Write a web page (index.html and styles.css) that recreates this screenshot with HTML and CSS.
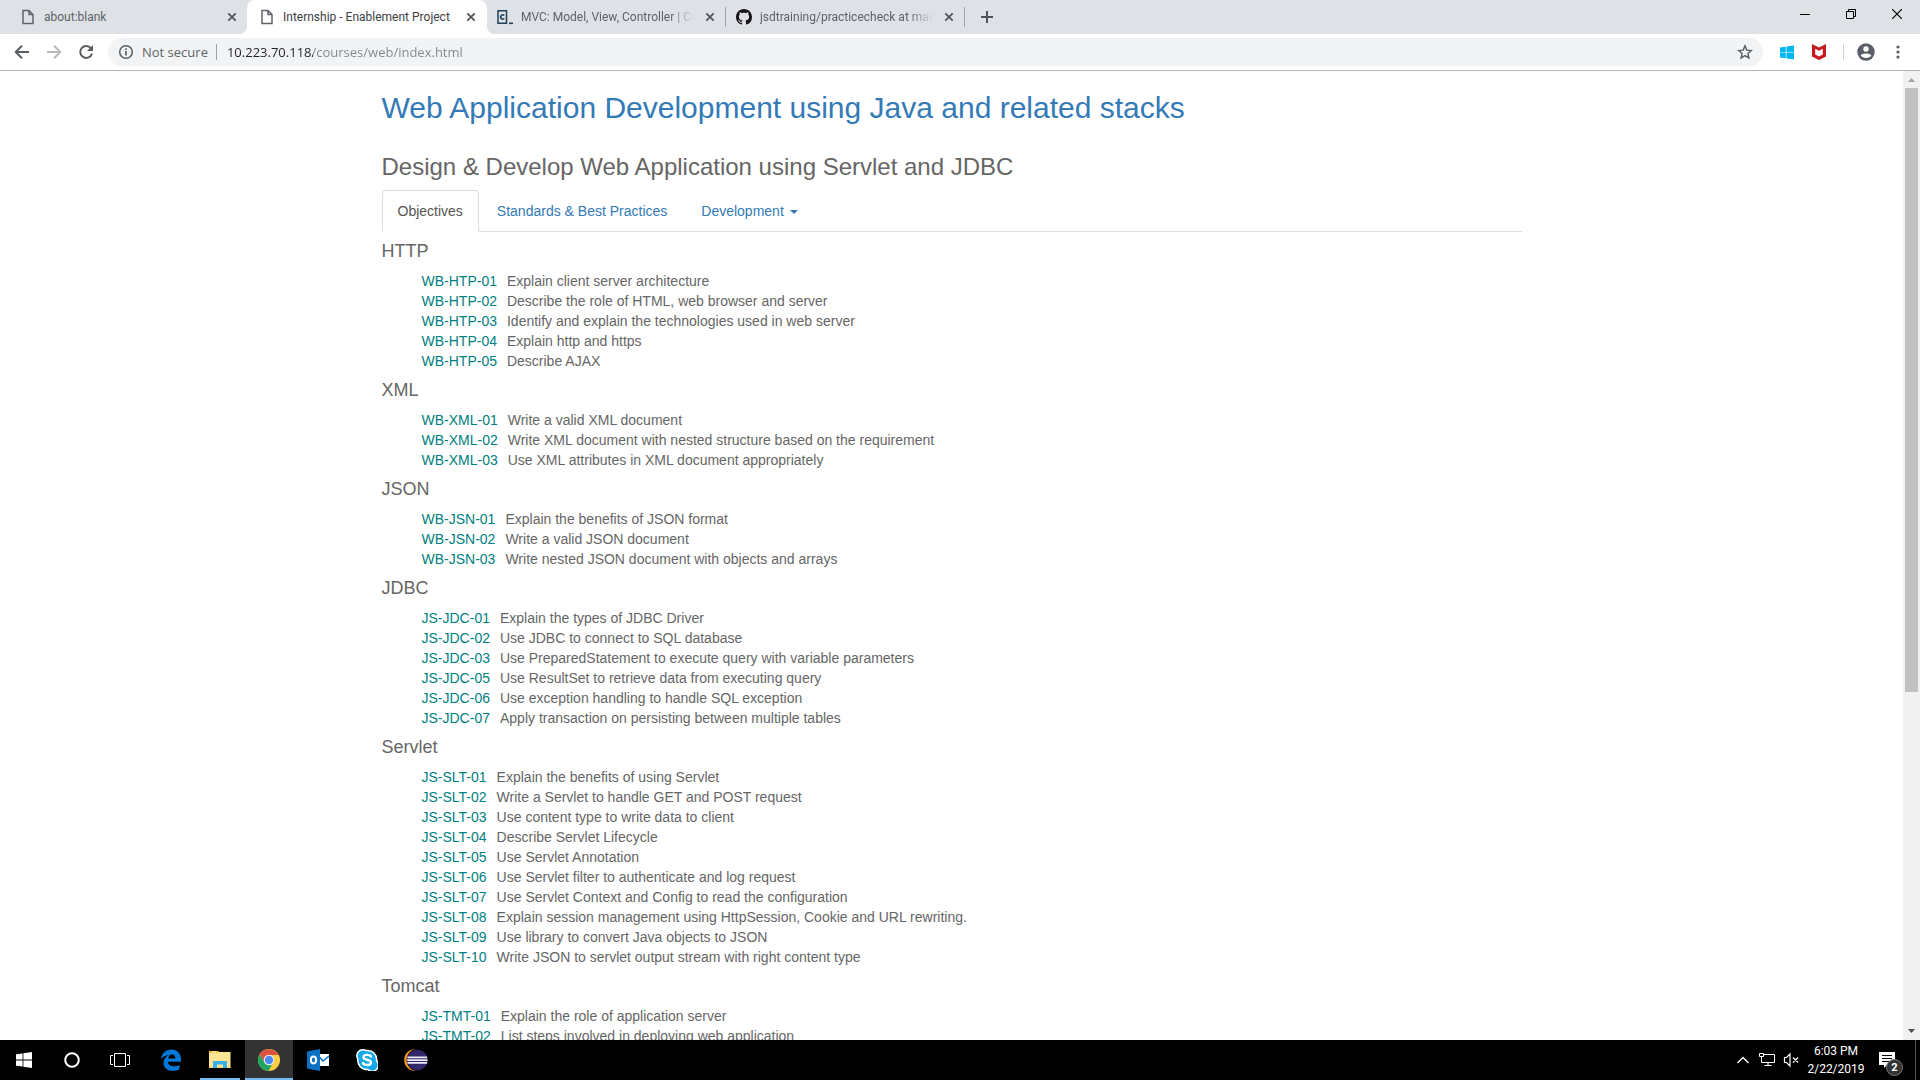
FILE: index.html
```html
<!DOCTYPE html>
<html lang="en">
<head>
<meta charset="utf-8">
<title>Internship - Enablement Project</title>
<link rel="stylesheet" href="styles.css">
</head>
<body>
<svg class="defs" aria-hidden="true">
  <symbol id="file" viewBox="0 0 16 16"><path d="M3 1.500h6L13 5.500v9H3zM9 1.500v4h4" fill="none" stroke="#5f6368" stroke-width="1.500"/></symbol>
  <symbol id="cross" viewBox="0 0 16 16"><path d="M4.300 4.300l7.400 7.400M11.700 4.300l-7.400 7.400" stroke="#4f5357" stroke-width="1.700"/></symbol>
  <symbol id="windows" viewBox="0 0 16 16"><path d="M0 2.300l6.600-.9v6.200H0zM7.400 1.200L16 0v7.600H7.400zM0 8.400h6.600v6.200L0 13.700zM7.400 8.400H16V16l-8.600-1.200z" fill="currentColor"/></symbol>
</svg>

<header class="browser">
  <div class="tabstrip">
    <div class="tab first">
      <svg class="favicon"><use href="#file"/></svg>
      <span class="tab-title">about:blank</span>
      <button class="tab-close" aria-label="Close tab"><svg class="favicon"><use href="#cross"/></svg></button>
    </div>
    <div class="tab active">
      <svg class="favicon"><use href="#file"/></svg>
      <span class="tab-title">Internship - Enablement Project</span>
      <button class="tab-close" aria-label="Close tab"><svg class="favicon"><use href="#cross"/></svg></button>
    </div>
    <div class="tab divided">
      <svg class="favicon" viewBox="0 0 16 16"><path d="M1 1.700h8.500v12.600H1z" fill="none" stroke="#204056" stroke-width="1.500"/><path d="M7.200 6.500a2 2.200 0 1 0 0 3" fill="none" stroke="#204056" stroke-width="1.600"/><path d="M12 14.300h4" stroke="#204056" stroke-width="1.600"/></svg>
      <span class="tab-title fade">MVC: Model, View, Controller | Co</span>
      <button class="tab-close" aria-label="Close tab"><svg class="favicon"><use href="#cross"/></svg></button>
    </div>
    <div class="tab divided">
      <svg class="favicon" viewBox="0 0 16 16"><path fill="#171515" d="M8 0C3.580 0 0 3.580 0 8c0 3.540 2.290 6.530 5.470 7.590.4.070.55-.17.55-.38 0-.19-.01-.82-.01-1.490-2.010.37-2.530-.49-2.690-.94-.09-.23-.48-.94-.82-1.130-.28-.15-.68-.52-.01-.53.63-.01 1.080.58 1.230.82.72 1.210 1.870.87 2.330.66.07-.52.28-.87.51-1.070-1.780-.2-3.640-.89-3.640-3.950 0-.87.31-1.590.82-2.150-.08-.2-.36-1.020.08-2.120 0 0 .67-.21 2.200.82.64-.18 1.320-.27 2-.27s1.360.09 2 .27c1.530-1.040 2.200-.82 2.200-.82.44 1.100.16 1.920.08 2.120.51.56.82 1.270.82 2.150 0 3.070-1.870 3.750-3.650 3.950.29.25.54.73.54 1.480 0 1.070-.01 1.930-.01 2.200 0 .21.15.46.55.38A8.010 8.010 0 0 0 16 8c0-4.420-3.580-8-8-8z"/></svg>
      <span class="tab-title fade">jsdtraining/practicecheck at mast</span>
      <button class="tab-close" aria-label="Close tab"><svg class="favicon"><use href="#cross"/></svg></button>
    </div>
    <button class="new-tab" aria-label="New tab"><svg class="favicon" viewBox="0 0 16 16"><path d="M8 2v12M2 8h12" stroke="#50545a" stroke-width="2"/></svg></button>
    <div class="window-controls">
      <button aria-label="Minimize"><svg class="caption-icon" viewBox="0 0 10 10"><path d="M0 5.500h10" stroke="#000"/></svg></button>
      <button aria-label="Restore"><svg class="caption-icon" viewBox="0 0 10 10"><path d="M.5 2.500h7v7h-7zM2.500 2.500v-2h7v7h-2" fill="none" stroke="#000"/></svg></button>
      <button aria-label="Close"><svg class="caption-icon" viewBox="0 0 10 10"><path d="M0 0l10 10M10 0L0 10" stroke="#000" stroke-width="1.200"/></svg></button>
    </div>
  </div>
  <div class="toolbar">
    <button class="tool" aria-label="Back"><svg class="favicon" viewBox="0 0 16 16"><path d="M15 8H2M8 1.700L1.700 8 8 14.300" fill="none" stroke="#5a5e63" stroke-width="2"/></svg></button>
    <button class="tool" aria-label="Forward"><svg class="favicon" viewBox="0 0 16 16"><path d="M1 8h13M8 1.700L14.300 8 8 14.300" fill="none" stroke="#b9babc" stroke-width="2"/></svg></button>
    <button class="tool" aria-label="Reload"><svg class="favicon" viewBox="0 0 16 16"><path d="M13 4.300A6 6 0 1 0 14 9.500" fill="none" stroke="#5a5e63" stroke-width="2"/><path d="M15 1v6H9z" fill="#5a5e63"/></svg></button>
    <div class="omnibox">
      <svg class="favicon" viewBox="0 0 16 16"><circle cx="8" cy="8" r="6.300" fill="none" stroke="#5a5e63" stroke-width="1.500"/><path d="M8 7v4.500M8 4.300v1.600" stroke="#5a5e63" stroke-width="1.700"/></svg>
      <label class="security" for="address">Not secure</label>
      <input class="address" id="address" type="text" value="10.223.70.118/courses/web/index.html">
      <button class="star" aria-label="Bookmark this page"><svg class="favicon" viewBox="0 0 16 16"><path d="M8 1.900l1.800 4.200 4.500.4-3.400 3 1 4.500L8 11.600 4.100 14l1-4.500-3.400-3 4.500-.4z" fill="none" stroke="#5a5e63" stroke-width="1.400"/></svg></button>
    </div>
    <button class="tool windows-ext" aria-label="Windows extension"><svg class="ext-icon"><use href="#windows"/></svg></button>
    <button class="tool" aria-label="McAfee WebAdvisor"><svg class="favicon" viewBox="0 0 16 16"><path d="M1 0l7 3.500L15 0v12.500L8 16l-7-3.500z" fill="#c8191e"/><path d="M4.200 4.800L8 6.700l3.800-1.900v5.700L8 12.500l-3.800-2z" fill="#fff"/></svg></button>
    <span class="tool-divider"></span>
    <button class="tool profile" aria-label="Profile"><svg class="avatar" viewBox="0 0 18 18"><circle cx="9" cy="9" r="8.700" fill="#5a5e66"/><circle cx="9" cy="6" r="2.700" fill="#fff"/><path d="M3.600 12.500C4.800 9.700 13.200 9.700 14.400 12.500 12.500 15.800 5.500 15.800 3.600 12.500z" fill="#fff"/></svg></button>
    <button class="tool" aria-label="Menu"><svg class="favicon" viewBox="0 0 16 16"><g fill="#5a5e63"><circle cx="8" cy="3" r="1.600"/><circle cx="8" cy="8" r="1.600"/><circle cx="8" cy="13" r="1.600"/></g></svg></button>
  </div>
</header>

<div class="viewport">
  <main class="page">
    <div class="container">
      <h2 class="course">Web Application Development using Java and related stacks</h2>
      <h3 class="module">Design &amp; Develop Web Application using Servlet and JDBC</h3>
      <nav class="nav-tabs">
        <a class="nav-link current" href="#objectives">Objectives</a>
        <a class="nav-link" href="#standards">Standards &amp; Best Practices</a>
        <a class="nav-link" href="#development">Development <span class="caret"></span></a>
      </nav>
      <section id="objectives">
        <h4 class="topic">HTTP</h4>
        <ul class="goals">
          <li><span class="code">WB-HTP-01</span>Explain client server architecture</li>
          <li><span class="code">WB-HTP-02</span>Describe the role of HTML, web browser and server</li>
          <li><span class="code">WB-HTP-03</span>Identify and explain the technologies used in web server</li>
          <li><span class="code">WB-HTP-04</span>Explain http and https</li>
          <li><span class="code">WB-HTP-05</span>Describe AJAX</li>
        </ul>
        <h4 class="topic">XML</h4>
        <ul class="goals">
          <li><span class="code">WB-XML-01</span>Write a valid XML document</li>
          <li><span class="code">WB-XML-02</span>Write XML document with nested structure based on the requirement</li>
          <li><span class="code">WB-XML-03</span>Use XML attributes in XML document appropriately</li>
        </ul>
        <h4 class="topic">JSON</h4>
        <ul class="goals">
          <li><span class="code">WB-JSN-01</span>Explain the benefits of JSON format</li>
          <li><span class="code">WB-JSN-02</span>Write a valid JSON document</li>
          <li><span class="code">WB-JSN-03</span>Write nested JSON document with objects and arrays</li>
        </ul>
        <h4 class="topic">JDBC</h4>
        <ul class="goals">
          <li><span class="code">JS-JDC-01</span>Explain the types of JDBC Driver</li>
          <li><span class="code">JS-JDC-02</span>Use JDBC to connect to SQL database</li>
          <li><span class="code">JS-JDC-03</span>Use PreparedStatement to execute query with variable parameters</li>
          <li><span class="code">JS-JDC-05</span>Use ResultSet to retrieve data from executing query</li>
          <li><span class="code">JS-JDC-06</span>Use exception handling to handle SQL exception</li>
          <li><span class="code">JS-JDC-07</span>Apply transaction on persisting between multiple tables</li>
        </ul>
        <h4 class="topic">Servlet</h4>
        <ul class="goals">
          <li><span class="code">JS-SLT-01</span>Explain the benefits of using Servlet</li>
          <li><span class="code">JS-SLT-02</span>Write a Servlet to handle GET and POST request</li>
          <li><span class="code">JS-SLT-03</span>Use content type to write data to client</li>
          <li><span class="code">JS-SLT-04</span>Describe Servlet Lifecycle</li>
          <li><span class="code">JS-SLT-05</span>Use Servlet Annotation</li>
          <li><span class="code">JS-SLT-06</span>Use Servlet filter to authenticate and log request</li>
          <li><span class="code">JS-SLT-07</span>Use Servlet Context and Config to read the configuration</li>
          <li><span class="code">JS-SLT-08</span>Explain session management using HttpSession, Cookie and URL rewriting.</li>
          <li><span class="code">JS-SLT-09</span>Use library to convert Java objects to JSON</li>
          <li><span class="code">JS-SLT-10</span>Write JSON to servlet output stream with right content type</li>
        </ul>
        <h4 class="topic">Tomcat</h4>
        <ul class="goals">
          <li><span class="code">JS-TMT-01</span>Explain the role of application server</li>
          <li><span class="code">JS-TMT-02</span>List steps involved in deploying web application</li>
        </ul>
      </section>
    </div>
  </main>
  <div class="scrollbar">
    <svg class="scroll-arrow" viewBox="0 0 17 17"><path d="M5 11l3.500-4L12 11z" fill="#a3a3a3"/></svg>
    <div class="scroll-track"><div class="scroll-thumb"></div></div>
    <svg class="scroll-arrow" viewBox="0 0 17 17"><path d="M5 6l3.500 4L12 6z" fill="#505050"/></svg>
  </div>
</div>

<footer class="taskbar">
  <button class="task" aria-label="Start"><svg class="favicon" aria-hidden="true"><use href="#windows"/></svg></button>
  <button class="task" aria-label="Cortana"><svg class="favicon" viewBox="0 0 16 16"><circle cx="8" cy="8" r="6.800" fill="none" stroke="#fff" stroke-width="2"/></svg></button>
  <button class="task" aria-label="Task View"><svg class="task-view" viewBox="0 0 20 14"><path d="M4.500.5h11v13h-11zM3 2.500H.5v9H3M17 2.500h2.500v9H17" fill="none" stroke="#fff"/></svg></button>
  <div class="apps">
    <button class="task" aria-label="Edge"><svg class="app-icon" viewBox="0 0 22 22"><path d="M1 10C2 4 6 .5 11.500.5 17.500.5 21 5 21 10v2.800H8c.2 3 2.700 4.500 5.900 4.500 2.300 0 4-.5 5.600-1.500v4.400c-2 1.100-4.300 1.600-7 1.600C7 21.800 3.500 18.500 3.500 14c0-3.700 2-6.500 5.500-8C5 6.500 2.700 8 1 10zM8.200 9.500h7.200C15.300 7 14.100 5.500 12 5.500S8.700 7 8.200 9.500z" fill="#0078d7"/></svg></button>
    <button class="task running" aria-label="File Explorer"><svg class="app-icon" viewBox="0 0 22 22"><path d="M0 2h9l1 1h11.500v16H0z" fill="#ffe593"/><path d="M0 2h9v2H0z" fill="#f2b91b"/><path d="M3 2.500h4v1H3z" fill="#fff"/><path d="M0 17.500h21.500V19H0z" fill="#f7d36d"/><path d="M4 19v-7h14v7h-4v-3.500H8V19z" fill="#35b1e8"/></svg></button>
    <button class="task focused" aria-label="Chrome"><svg class="app-icon" viewBox="0 0 22 22"><circle cx="11" cy="11" r="11" fill="#ffce44"/><path d="M1.500 5.500A11 11 0 0 1 20.600 6H11a5 5 0 0 0-4.800 6.500z" fill="#dd5144"/><path d="M1.500 5.500A11 11 0 0 0 10.500 22L15 14a5 5 0 0 1-8.500-.5z" fill="#1da462"/><circle cx="11" cy="11" r="5.200" fill="#f1f1f1"/><circle cx="11" cy="11" r="4.200" fill="#4c8bf5"/></svg></button>
    <button class="task" aria-label="Outlook"><svg class="app-icon" viewBox="0 0 22 22"><path d="M11 5h11v12H11z" fill="#fff"/><path d="M13 8.500l3 3.500 6-5" fill="none" stroke="#0a71c5" stroke-width="1.600"/><path d="M0 2.500L13 0v22L0 19.500z" fill="#0a71c5"/><ellipse cx="6.500" cy="11" rx="2.600" ry="3.400" fill="none" stroke="#fff" stroke-width="2"/></svg></button>
    <button class="task" aria-label="Skype"><svg class="app-icon" viewBox="0 0 22 22"><path d="M6.500.8a6 6 0 0 1 3.800.8c6-.8 11 4 10.200 10A6 6 0 0 1 11.800 20.500C5.500 21 1.200 16 1.800 10A6 6 0 0 1 6.500.8z" fill="#16a7e8" stroke="#fff" stroke-width="1.500"/><path d="M15 7.500C14 5.500 7.500 5 7.500 8.300c0 3.200 7.500 1.700 7.500 5.200 0 3.400-7 3-8 .5" fill="none" stroke="#fff" stroke-width="2.400" stroke-linecap="round"/></svg></button>
    <button class="task" aria-label="Eclipse"><svg class="eclipse" viewBox="0 0 24 22"><circle cx="11" cy="11" r="10.800" fill="#f7941e"/><circle cx="13.600" cy="11" r="11" fill="#000"/><circle cx="13.400" cy="11" r="10.300" fill="#33286b"/><path d="M3.500 7.500h19.700v1.700H3.300zM3.200 10.300h20.400V12H3.200zM3.300 13h19.900v1.700H3.500z" fill="#eceaf4"/></svg></button>
  </div>
  <div class="tray">
    <button class="tray-item" aria-label="Show hidden icons"><svg class="favicon" viewBox="0 0 16 16"><path d="M2.500 11L8 5.500l5.500 5.500" fill="none" stroke="#fff" stroke-width="1.400"/></svg></button>
    <button class="tray-item" aria-label="Network"><svg class="favicon" viewBox="0 0 16 16"><path d="M5 2.500h10.500v8H2.500V8M9 10.500v3M5.500 13.500h7M.5 1.500h4v3h-4zM2.500 4.500V8" fill="none" stroke="#fff"/></svg></button>
    <button class="tray-item" aria-label="Volume muted"><svg class="favicon" viewBox="0 0 16 16"><path d="M1.500 5.500h2L7 2v12l-3.500-3.500h-2zM10 5.500l5 5M15 5.500l-5 5" fill="none" stroke="#fff" stroke-width="1.200"/></svg></button>
    <div class="clock"><span>6:03 PM</span><span>2/22/2019</span></div>
    <button class="notifications" aria-label="Notifications"><svg class="favicon" viewBox="0 0 16 16"><path d="M0 0h16v13H8l-3 3v-3H0z" fill="#fff"/><path d="M3 3.500h10M3 6.500h10M3 9.500h7" stroke="#000"/></svg><span class="badge">2</span></button>
    <span class="show-desktop"></span>
  </div>
</footer>
</body>
</html>
```
FILE: styles.css
```css
* { box-sizing: border-box; }

body {
  display: flex;
  flex-direction: column;
  height: 100vh;
  margin: 0;
  overflow: hidden;
  background: #fff;
  color: #666;
  font: 14px/20px "Liberation Sans", Arial, sans-serif;
}

button {
  display: flex;
  align-items: center;
  justify-content: center;
  padding: 0;
  border: 0;
  background: none;
  color: inherit;
  font: inherit;
}

svg { display: block; flex: none; }
.defs { display: none; }
.favicon { width: 16px; height: 16px; }

/* Browser frame */
.browser {
  flex: none;
  border-bottom: 1px solid #b4b4b6;
  font-family: "Open Sans", "Noto Sans", sans-serif;
}

.tabstrip {
  display: flex;
  height: 34px;
  padding-left: 10px;
  background: #dee1e6;
  color: #5f6368;
  font-family: Roboto, "Noto Sans", sans-serif;
  font-size: 12px;
}

.tab {
  position: relative;
  display: flex;
  align-items: center;
  gap: 8px;
  width: 239px;
  padding: 0 8px 0 10px;
}
.tab.first { width: 237px; padding-right: 7px; }
.tab.active {
  z-index: 1;
  width: 240px;
  padding-left: 12px;
  border-radius: 8px 8px 0 0;
  background: #fff;
  color: #3c4043;
}
.tab.active::before,
.tab.active::after {
  content: "";
  position: absolute;
  bottom: 0;
  width: 8px;
  height: 8px;
}
.tab.active::before { left: -8px; background: radial-gradient(circle at 0 0, transparent 8px, #fff 8px); }
.tab.active::after { right: -8px; background: radial-gradient(circle at 100% 0, transparent 8px, #fff 8px); }
.tab.divided::after {
  content: "";
  position: absolute;
  top: 7px;
  right: 0;
  width: 1px;
  height: 20px;
  background: #a0a3a8;
}
.tab-title { flex: 1; overflow: hidden; white-space: nowrap; }
.tab-title.fade { mask-image: linear-gradient(to left, transparent, #000 24px); }
.new-tab { width: 43px; }

.window-controls { display: flex; height: 28px; margin-left: auto; }
.window-controls button { width: 46px; }
.caption-icon { width: 10px; height: 10px; }

.toolbar { display: flex; align-items: center; height: 36px; padding: 0 6px; }
.tool { width: 32px; height: 28px; }
.windows-ext { margin-left: 8px; color: #00b7f1; }
.ext-icon { width: 14px; height: 15px; }
.tool-divider { width: 1px; height: 16px; margin: 0 6px 0 8px; background: #cfd0d2; }
.avatar { width: 18px; height: 18px; }

.omnibox {
  display: flex;
  flex: 1;
  align-items: center;
  gap: 8px;
  height: 28px;
  margin-left: 6px;
  padding: 0 10px;
  border-radius: 14px;
  background: #f1f3f4;
  font-size: 13px;
}
.security { padding-right: 8px; border-right: 1px solid #9fa2a6; color: #5f6368; line-height: 16px; }
.address {
  flex: 1;
  padding: 0 2px;
  border: 0;
  outline: 0;
  background: linear-gradient(to right, #202124 88px, #80868b 88px);
  background-clip: text;
  -webkit-text-fill-color: transparent;
  font: inherit;
}

/* Course page */
.viewport { display: flex; flex: 1; min-height: 0; }
.page { flex: 1; overflow: hidden; }
.container { max-width: 1170px; margin: 0 auto; padding: 0 15px; }
h2, h3, h4 { margin: 0; font-weight: 400; }
.course { padding: 20px 0; color: #337ab7; font-size: 30px; line-height: 33px; }
.module { padding: 10px 0; font-size: 24px; line-height: 26px; }

.nav-tabs { display: flex; gap: 2px; border-bottom: 1px solid #ddd; }
.nav-link {
  margin-bottom: -1px;
  padding: 10px 15px;
  border: 1px solid transparent;
  border-radius: 4px 4px 0 0;
  color: #337ab7;
  text-decoration: none;
}
.nav-link.current { border-color: #ddd #ddd #fff; background: #fff; color: #555; }
.caret {
  display: inline-block;
  margin-left: 2px;
  border: 4px solid transparent;
  border-top-color: currentColor;
  border-bottom: 0;
  vertical-align: middle;
}

.topic { padding: 10px 0; font-size: 18px; line-height: 19px; }
.goals { margin: 0; padding: 0 0 0 40px; list-style: none; }
.code { margin-right: 10px; color: #008080; }

.scrollbar { display: flex; flex-direction: column; width: 17px; background: #f1f1f1; }
.scroll-arrow { width: 17px; height: 17px; }
.scroll-track { flex: 1; padding: 0 2px; }
.scroll-thumb { height: 64.6%; background: #c1c1c1; }

/* Windows taskbar */
.taskbar {
  display: flex;
  flex: none;
  height: 40px;
  background: #000;
  color: #fff;
  font: 12px/18px Roboto, "Noto Sans", sans-serif;
}
.task { width: 48px; height: 40px; }
.task-view { width: 20px; height: 14px; }
.apps { display: flex; gap: 1px; margin-left: 3px; }
.app-icon { width: 22px; height: 22px; }
.eclipse { width: 24px; height: 22px; }
.running { background: linear-gradient(#76b9ed, #76b9ed) center bottom / 40px 2px no-repeat; }
.focused { background: #333; box-shadow: inset 0 -2px #76b9ed; }

.tray { display: flex; align-items: center; margin-left: auto; }
.tray-item { width: 24px; height: 40px; }
.clock { display: flex; flex-direction: column; align-items: center; width: 66px; }
.notifications { position: relative; width: 36px; height: 40px; }
.badge {
  position: absolute;
  top: 19px;
  left: 17px;
  width: 17px;
  height: 17px;
  border: 1px solid #777;
  border-radius: 50%;
  background: #333;
  font-size: 11px;
  font-weight: 700;
  line-height: 15px;
}
.show-desktop { width: 5px; height: 40px; margin-left: 10px; border-left: 1px solid #555; }
```
